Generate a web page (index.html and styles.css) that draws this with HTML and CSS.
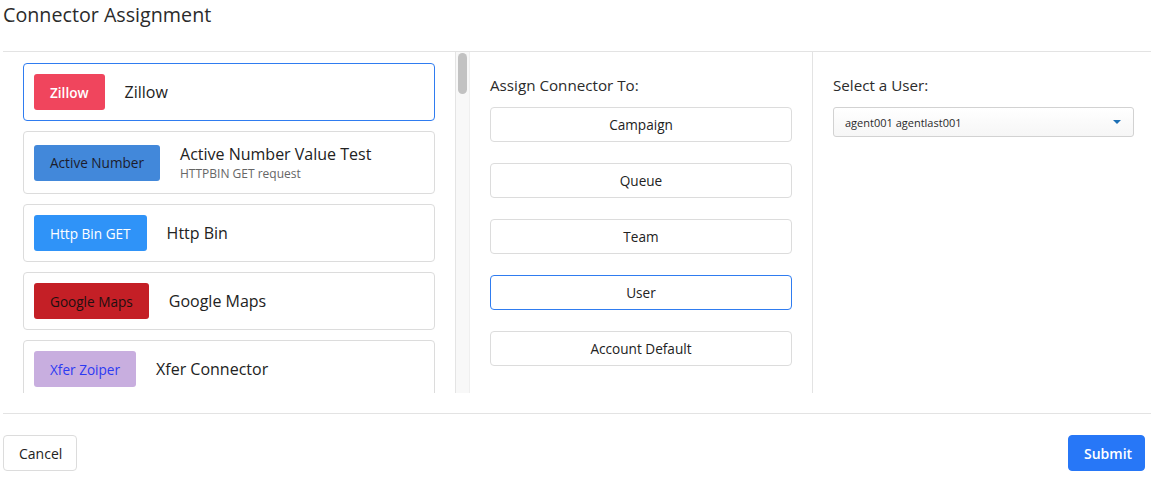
FILE: index.html
```html
<!DOCTYPE html>
<html lang="en">
<head>
<meta charset="utf-8">
<title>Connector Assignment</title>
<link rel="stylesheet" href="styles.css">
</head>
<body>
<div class="modal">
  <header class="modal-head">
    <h2 class="modal-title">Connector Assignment</h2>
  </header>

  <div class="modal-body">
    <div class="connectors">
      <div class="card card-active">
        <span class="badge badge-zillow">Zillow</span>
        <div class="card-text"><div class="card-title">Zillow</div></div>
      </div>
      <div class="card card-tall">
        <span class="badge badge-active">Active Number</span>
        <div class="card-text">
          <div class="card-title">Active Number Value Test</div>
          <div class="card-sub">HTTPBIN GET request</div>
        </div>
      </div>
      <div class="card">
        <span class="badge badge-http">Http Bin GET</span>
        <div class="card-text"><div class="card-title">Http Bin</div></div>
      </div>
      <div class="card">
        <span class="badge badge-maps">Google Maps</span>
        <div class="card-text"><div class="card-title">Google Maps</div></div>
      </div>
      <div class="card">
        <span class="badge badge-xfer">Xfer Zoiper</span>
        <div class="card-text"><div class="card-title">Xfer Connector</div></div>
      </div>
    </div>

    <div class="scroll-track"><div class="scroll-thumb"></div></div>

    <section class="assign">
      <div class="col-label">Assign Connector To:</div>
      <div class="target-list">
        <button class="target">Campaign</button>
        <button class="target">Queue</button>
        <button class="target">Team</button>
        <button class="target target-on">User</button>
        <button class="target">Account Default</button>
      </div>
    </section>

    <section class="user-pick">
      <div class="col-label">Select a User:</div>
      <div class="select">
        <span class="select-value">agent001 agentlast001</span>
        <span class="select-caret"></span>
      </div>
    </section>
  </div>

  <footer class="modal-foot">
    <button class="btn btn-cancel">Cancel</button>
    <button class="btn btn-submit">Submit</button>
  </footer>
</div>
</body>
</html>
```

FILE: styles.css
```css
* {
  box-sizing: border-box;
}

html, body {
  margin: 0;
  padding: 0;
  background: #fff;
}

body {
  font-family: "Open Sans", "Noto Sans", "Liberation Sans", sans-serif;
  color: #222;
}

.modal {
  margin-left: 3px;
  width: 1148px;
  height: 479px;
  display: flex;
  flex-direction: column;
}

/* header */
.modal-head {
  height: 52px;
  border-bottom: 1px solid #e3e3e3;
  padding-top: 3px;
}

.modal-title {
  margin: 0;
  font-size: 19.7px;
  line-height: 24px;
  font-weight: 400;
  color: #2b2b2b;
}

/* body: connector list, scrollbar, two option columns */
.modal-body {
  height: 341px;
  display: flex;
}

.connectors {
  width: 452px;
  padding: 11px 20px 0 20px;
  overflow: hidden;
  display: flex;
  flex-direction: column;
  gap: 10px;
}

.card {
  flex: none;
  height: 58px;
  border: 1px solid #dcdcdc;
  border-radius: 4px;
  padding: 0 10px;
  display: flex;
  align-items: center;
  gap: 20px;
}

.card-tall {
  height: 63px;
}

.card-active {
  border-color: #2f7cf0;
}

.badge {
  height: 36px;
  padding: 0 16px;
  border-radius: 3px;
  display: flex;
  align-items: center;
  font-size: 13.6px;
  white-space: nowrap;
}

.badge-zillow { background: #f0455d; color: #fff; font-weight: 600; }
.badge-active { background: #4288da; color: #1c1c2c; }
.badge-http   { background: #2f93f8; color: #fff; }
.badge-maps   { background: #c41f26; color: #1e1010; }
.badge-xfer   { background: #c8aedf; color: #2c3af2; }

.card-title {
  font-size: 16px;
  line-height: 22px;
  color: #222;
}

.card-sub {
  font-size: 12px;
  line-height: 17px;
  color: #666;
}

.scroll-track {
  width: 15px;
  flex: none;
  background: #f8f8f8;
  border-left: 1px solid #e4e4e4;
  border-right: 1px solid #efefef;
  padding: 1px 0 0 2px;
}

.scroll-thumb {
  width: 9px;
  height: 41px;
  border-radius: 5px;
  background: #c2c2c2;
}

.assign {
  width: 343px;
  flex: none;
  border-right: 1px solid #e3e3e3;
  padding: 23px 20px 0 20px;
}

.col-label {
  font-size: 15.2px;
  line-height: 20px;
  color: #2b2b2b;
  margin-bottom: 12px;
}

.target-list {
  display: flex;
  flex-direction: column;
  gap: 21px;
}

.target {
  height: 35px;
  width: 100%;
  background: #fff;
  border: 1px solid #dcdcdc;
  border-radius: 4px;
  font-family: inherit;
  font-size: 13.6px;
  color: #222;
  padding: 0;
}

.target-on {
  border-color: #2f7cf0;
}

.user-pick {
  flex: 1;
  padding: 23px 17px 0 20px;
}

.select {
  height: 30px;
  border: 1px solid #d2d2d2;
  border-radius: 3px;
  background: linear-gradient(#ffffff, #f6f6f6);
  display: flex;
  align-items: center;
  justify-content: space-between;
  padding: 0 12px 0 11px;
}

.select-value {
  font-size: 11px;
  color: #2b2b2b;
}

.select-caret {
  width: 0;
  height: 0;
  border-left: 4px solid transparent;
  border-right: 4px solid transparent;
  border-top: 4px solid #1c6fb4;
}

/* footer */
.modal-foot {
  margin-top: 20px;
  border-top: 1px solid #e3e3e3;
  padding: 21px 6px 0 0;
  display: flex;
  justify-content: space-between;
  align-items: flex-start;
}

.btn {
  height: 36px;
  border-radius: 4px;
  font-family: inherit;
  font-size: 14px;
  padding: 0 15px;
}

.btn-cancel {
  width: 74px;
  background: #fff;
  border: 1px solid #dcdcdc;
  color: #222;
}

.btn-submit {
  width: 77px;
  background: #2777f7;
  border: 1px solid #2777f7;
  color: #fff;
  font-weight: 600;
}
```
